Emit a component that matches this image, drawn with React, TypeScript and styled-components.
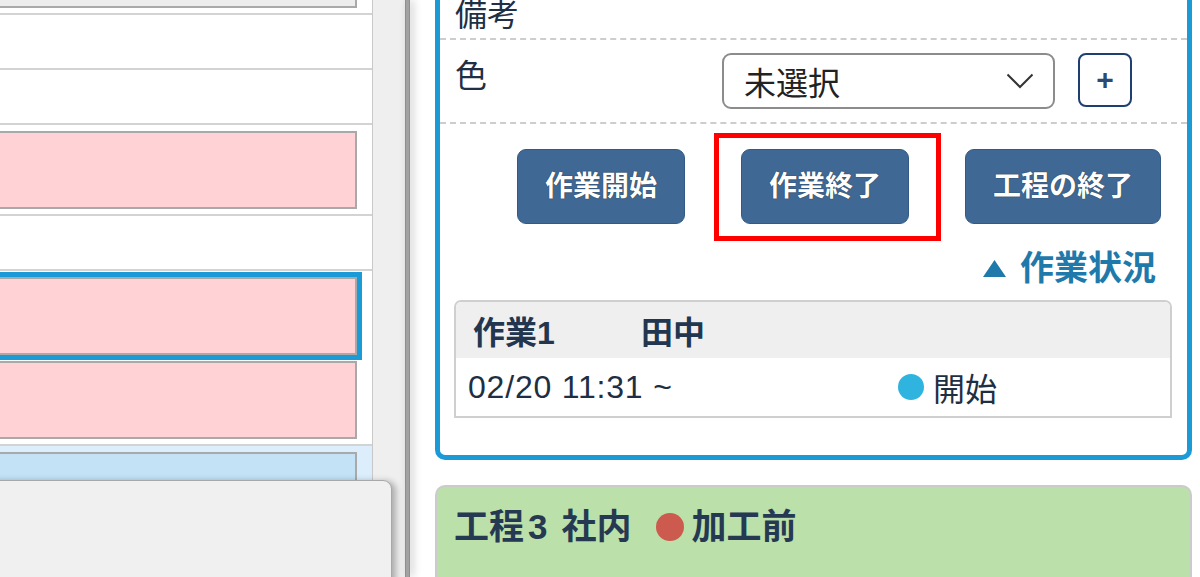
import React from "react";
import styled, { createGlobalStyle } from "styled-components";

const FONT = `"Liberation Sans", "Noto Sans CJK JP", sans-serif`;

const Global = createGlobalStyle`
  *, *::before, *::after { box-sizing: border-box; }
  html, body { margin: 0; padding: 0; background: #fff; }
  body { font-family: ${FONT}; }
  button { font-family: ${FONT}; }
`;

const Page = styled.div`
  display: flex;
  width: 1200px;
  height: 577px;
  overflow: hidden;
  background: #fff;
  font-family: ${FONT};
`;

/* ---------- left list pane ---------- */

const LeftPane = styled.div`
  position: relative;
  display: flex;
  flex: none;
  width: 405px;
`;

const List = styled.div`
  width: 373px;
  border-right: 1px solid #c9c9c9;
  overflow: hidden;
  background: #fff;
`;

const ListInner = styled.div`
  margin: -76px 0 0 -20px;
`;

const ListRow = styled.div<{ $tint?: boolean }>`
  display: flex;
  flex-direction: column;
  gap: 6px;
  min-height: 55px;
  padding: 6px 15px 5px 0;
  border-bottom: 2px solid #d3d3d3;
  background: ${(p) => (p.$tint ? "#dcedfc" : "#fff")};
`;

type ItemKind = "gray" | "pink" | "blue";
const itemBg: Record<ItemKind, string> = {
  gray: "#ededed",
  pink: "#ffd3d6",
  blue: "#c3e2f5",
};

const Item = styled.div<{ $kind: ItemKind; $selected?: boolean }>`
  height: 78px;
  border: 2px solid #a9a9a9;
  background: ${(p) => itemBg[p.$kind]};
  outline: ${(p) => (p.$selected ? "5px solid #1a9ad6" : "none")};
`;

const Track = styled.div`
  flex: 1;
  background: #efefef;
`;

const Overlay = styled.div`
  position: absolute;
  left: -12px;
  top: 480px;
  width: 404px;
  bottom: -12px;
  background: #f0f0f0;
  border: 1px solid #a8a8a8;
  border-radius: 0 9px 0 0;
  box-shadow: 4px 1px 6px rgba(0, 0, 0, 0.28);
`;

const Splitter = styled.div`
  position: relative;
  z-index: 1;
  flex: none;
  width: 5px;
  background: #a2a2a2;
  border-left: 1px solid #8e8e8e;
  border-right: 1px solid #8e8e8e;
  box-shadow: 3px 0 9px rgba(0, 0, 0, 0.22);
`;

/* ---------- right detail pane ---------- */

const RightPane = styled.div`
  flex: 1;
  min-width: 0;
  display: flex;
  flex-direction: column;
  gap: 25px;
  padding: 0 8px 0 25px;
`;

const Card = styled.section`
  flex: none;
  margin-top: -100px;
  border: 5px solid #1b9ad7;
  border-radius: 10px;
  background: #fff;
`;

const NoteRow = styled.div`
  display: flex;
  align-items: flex-end;
  height: 135px;
  padding: 0 13px 3px 15px;
  border-bottom: 2px dashed #cdcdcd;
`;

const Label = styled.span`
  font-size: 32px;
  line-height: 40px;
  color: #1f2f44;
`;

const ColorRow = styled.div`
  display: flex;
  align-items: flex-start;
  padding: 13px 55px 13px 15px;
  border-bottom: 2px dashed #cdcdcd;
`;

const ColorLabel = styled(Label)`
  flex: 1;
  line-height: 46px;
`;

const Select = styled.div`
  display: flex;
  align-items: center;
  justify-content: space-between;
  width: 333px;
  height: 56px;
  margin-right: 23px;
  padding: 0 19px 0 20px;
  border: 2px solid #8c8c8c;
  border-radius: 9px;
  font-size: 32px;
  color: #222;
`;

const PlusButton = styled.button`
  width: 54px;
  height: 54px;
  padding: 0;
  border: 2px solid #1f3f70;
  border-radius: 8px;
  background: #fff;
  color: #2d4b70;
  font-size: 30px;
  font-weight: bold;
  line-height: 1;
`;

const ActionArea = styled.div`
  display: flex;
  flex-direction: column;
  padding: 25px 15px 37px 14px;
`;

const ButtonRow = styled.div`
  display: flex;
  justify-content: flex-end;
  gap: 56px;
  padding-right: 11px;
`;

const ActionButton = styled.button`
  height: 75px;
  padding: 0 27px;
  background: #3f6895;
  border: 1px solid #335a85;
  border-radius: 9px;
  color: #fff;
  font-size: 28px;
  font-weight: bold;
  line-height: 1;
  text-shadow: 0 0 1px rgba(0, 0, 0, 0.8);
`;

const Highlight = styled.div`
  position: relative;
  &::after {
    content: "";
    position: absolute;
    inset: -16px -32px -17px -27px;
    border: 5px solid #ff0000;
    pointer-events: none;
  }
`;

const Toggle = styled.div`
  align-self: flex-end;
  display: flex;
  align-items: center;
  gap: 14px;
  margin: 24px 16px 0 0;
  font-size: 34px;
  font-weight: bold;
  line-height: 40px;
  color: #1f7aab;
`;

const Table = styled.div`
  margin-top: 12px;
  border: 2px solid #cfcfcf;
  border-radius: 7px 7px 0 0;
  overflow: hidden;
`;

const TableHead = styled.div`
  display: grid;
  grid-template-columns: 168px 1fr;
  align-items: center;
  height: 56px;
  padding-left: 17px;
  background: #efefef;
  font-size: 32px;
  font-weight: bold;
  color: #22364f;
`;

const TableRow = styled.div`
  display: grid;
  grid-template-columns: 430px 1fr;
  align-items: center;
  height: 58px;
  padding-left: 12px;
  font-size: 32px;
  color: #1e2f44;
`;

const DateText = styled.span`
  letter-spacing: 0.8px;
`;

const Status = styled.span`
  display: flex;
  align-items: center;
  gap: 9px;
`;

const Dot = styled.span<{ $color: string; $size: number }>`
  flex: none;
  width: ${(p) => p.$size}px;
  height: ${(p) => p.$size}px;
  border-radius: 50%;
  background: ${(p) => p.$color};
`;

const StepCard = styled.section`
  flex: none;
  border: 2px solid #cbcbcb;
  border-bottom: none;
  border-radius: 10px 10px 0 0;
  background: #bce0a9;
  padding: 18px 17px 40px;
`;

const StepTitle = styled.h2`
  display: flex;
  align-items: center;
  margin: 0;
  font-size: 35px;
  font-weight: bold;
  line-height: 44px;
  color: #253a52;
`;

const TitleName = styled.span`
  margin-right: 14px;
  & > b {
    margin-left: 4px;
  }
`;

const TitleDot = styled(Dot)`
  margin: 0 8px 0 24px;
`;

const Chevron = () => (
  <svg width="28" height="16" viewBox="0 0 28 16" fill="none">
    <polyline points="1.5,1.5 14,14 26.5,1.5" stroke="#333" strokeWidth="2" />
  </svg>
);

const UpTriangle = () => (
  <svg width="23" height="17" viewBox="0 0 23 17">
    <polygon points="11.5,0 23,17 0,17" fill="#1f7aab" />
  </svg>
);

export default function App() {
  return (
    <>
      <Global />
      <Page>
        <LeftPane>
          <List>
            <ListInner>
              <ListRow>
                <Item $kind="gray" />
              </ListRow>
              <ListRow />
              <ListRow />
              <ListRow>
                <Item $kind="pink" />
              </ListRow>
              <ListRow />
              <ListRow>
                <Item $kind="pink" $selected />
                <Item $kind="pink" />
              </ListRow>
              <ListRow $tint>
                <Item $kind="blue" />
              </ListRow>
            </ListInner>
          </List>
          <Track />
          <Overlay />
        </LeftPane>
        <Splitter />
        <RightPane>
          <Card>
            <NoteRow>
              <Label>備考</Label>
            </NoteRow>
            <ColorRow>
              <ColorLabel>色</ColorLabel>
              <Select>
                <span>未選択</span>
                <Chevron />
              </Select>
              <PlusButton>+</PlusButton>
            </ColorRow>
            <ActionArea>
              <ButtonRow>
                <ActionButton>作業開始</ActionButton>
                <Highlight>
                  <ActionButton>作業終了</ActionButton>
                </Highlight>
                <ActionButton>工程の終了</ActionButton>
              </ButtonRow>
              <Toggle>
                <UpTriangle />
                <span>作業状況</span>
              </Toggle>
              <Table>
                <TableHead>
                  <span>作業1</span>
                  <span>田中</span>
                </TableHead>
                <TableRow>
                  <DateText>02/20 11:31 ~</DateText>
                  <Status>
                    <Dot $color="#2fb4df" $size={26} />
                    <span>開始</span>
                  </Status>
                </TableRow>
              </Table>
            </ActionArea>
          </Card>
          <StepCard>
            <StepTitle>
              <TitleName>
                工程<b>3</b>
              </TitleName>
              <span>社内</span>
              <TitleDot $color="#cc5a4e" $size={28} />
              <span>加工前</span>
            </StepTitle>
          </StepCard>
        </RightPane>
      </Page>
    </>
  );
}
